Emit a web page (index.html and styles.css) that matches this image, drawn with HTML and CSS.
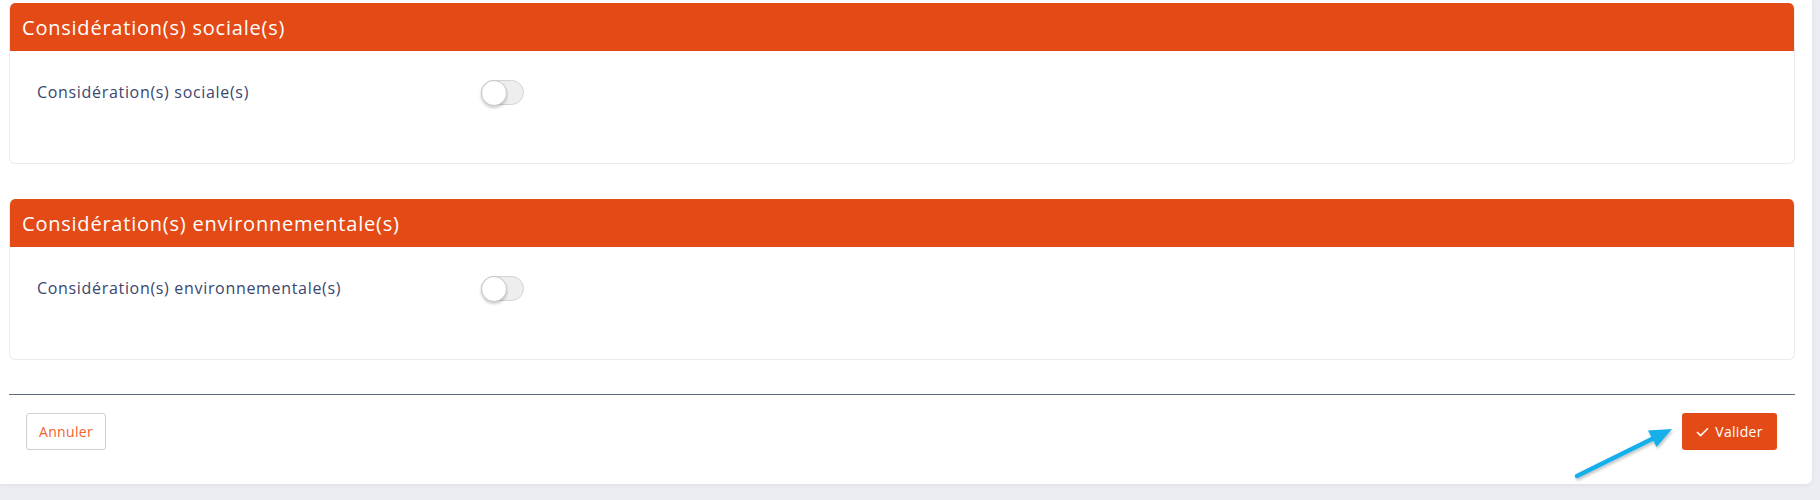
FILE: index.html
```html
<!DOCTYPE html>
<html lang="fr">
<head>
<meta charset="utf-8">
<title>Considérations</title>
<link rel="stylesheet" href="styles.css">
</head>
<body>
<div class="panel">
  <section class="card">
    <header class="card-header">Considération(s) sociale(s)</header>
    <div class="card-body">
      <div class="field">
        <label class="field-label">Considération(s) sociale(s)</label>
        <span class="toggle"><span class="knob"></span></span>
      </div>
    </div>
  </section>
  <section class="card">
    <header class="card-header">Considération(s) environnementale(s)</header>
    <div class="card-body">
      <div class="field">
        <label class="field-label">Considération(s) environnementale(s)</label>
        <span class="toggle"><span class="knob"></span></span>
      </div>
    </div>
  </section>
  <hr class="divider">
  <div class="actions">
    <button class="btn btn-cancel">Annuler</button>
    <button class="btn btn-ok"><svg class="check" width="13" height="10" viewBox="0 0 13 10"><polyline points="1,5 4.6,8.6 12,1.2" fill="none" stroke="#fff" stroke-width="1.5"/></svg>Valider</button>
  </div>
</div>
<svg class="annot-arrow" width="1820" height="500" viewBox="0 0 1820 500">
  <defs>
    <filter id="sh" x="-20%" y="-20%" width="140%" height="140%">
      <feDropShadow dx="1" dy="2" stdDeviation="1.5" flood-color="#000" flood-opacity="0.25"/>
    </filter>
  </defs>
  <g filter="url(#sh)">
    <line x1="1577" y1="476" x2="1654" y2="438" stroke="#12AFEA" stroke-width="4.5" stroke-linecap="round"/>
    <polygon points="1672,429 1648,430.5 1656.5,447" fill="#12AFEA"/>
  </g>
</svg>
</body>
</html>
```
FILE: styles.css
```css
* { box-sizing: border-box; }
html, body { margin: 0; padding: 0; }
body {
  background: #ecedf2;
  font-family: "Open Sans", "Noto Sans", sans-serif;
  width: 1820px;
  height: 500px;
  overflow: hidden;
  position: relative;
}
.panel {
  width: 1812px;
  background: #fff;
  border-radius: 0 0 6px 0;
  padding: 3px 17px 34px 9px;
  box-shadow: 0 1px 4px rgba(60, 70, 100, 0.08);
}
.card {
  border: 1px solid #ebebeb;
  border-top: 0;
  border-radius: 6px;
  overflow: hidden;
  margin-bottom: 35px;
}
.card + .card { margin-bottom: 34px; }
.card-header {
  height: 48px;
  background: #e44a15;
  color: #fff;
  font-size: 20px;
  font-weight: 400;
  letter-spacing: 0.78px;
  display: flex;
  align-items: center;
  padding-left: 12px;
}
.card-body {
  padding: 28px 0 58px 27px;
}
.field {
  display: flex;
  align-items: center;
  height: 26px;
}
.field-label {
  width: 444px;
  font-size: 16px;
  font-weight: 400;
  color: #3a4670;
  letter-spacing: 0.68px;
}
.toggle {
  position: relative;
  width: 43px;
  height: 25px;
  border-radius: 13px;
  background: #eeeeee;
  border: 1px solid #d4d4d4;
}
.knob {
  position: absolute;
  left: -1px;
  top: -1px;
  width: 26px;
  height: 26px;
  border-radius: 50%;
  background: #fff;
  border: 1px solid #c8c8c8;
  box-shadow: 0 2px 3px rgba(0, 0, 0, 0.2);
}
.divider {
  margin: 0;
  border: 0;
  border-top: 1px solid #5e6c7f;
}
.actions {
  display: flex;
  justify-content: space-between;
  padding: 18px 18px 0 17px;
}
.btn {
  height: 37px;
  border-radius: 3px;
  font-family: "Open Sans", "Noto Sans", sans-serif;
  font-size: 14px;
  font-weight: 400;
  letter-spacing: 0.3px;
  display: flex;
  align-items: center;
  justify-content: center;
  cursor: pointer;
}
.btn-cancel {
  width: 80px;
  background: #fff;
  color: #f2622e;
  border: 1px solid #cfcfcf;
}
.btn-ok {
  width: 95px;
  background: #e44a15;
  color: #fff;
  border: 0;
  gap: 6px;
}
.check { display: block; }
.annot-arrow {
  position: absolute;
  left: 0;
  top: 0;
  pointer-events: none;
}
```
